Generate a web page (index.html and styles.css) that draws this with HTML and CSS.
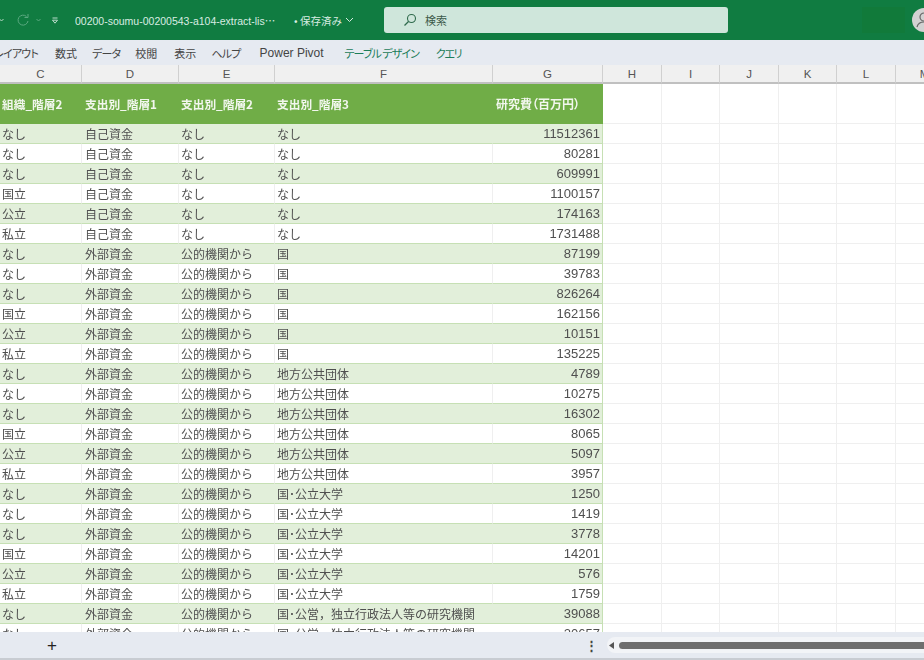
FILE: index.html
```html
<!DOCTYPE html>
<html lang="ja">
<head>
<meta charset="utf-8">
<title>Excel</title>
<link rel="stylesheet" href="styles.css">
</head>
<body>
<div class="app">
<header class="titlebar">
  <div class="qat">
    <svg class="chev" width="5" height="4" viewBox="0 0 5 4"><path d="M0.5 1l2 2 2-2" fill="none" stroke="#b5d8c4"/></svg>
    <svg class="redo" width="14" height="14" viewBox="0 0 14 14"><path d="M10.5 3.5A5 5 0 1 0 12 8M12 1v3.5H8.5" fill="none" stroke="#5aa880" stroke-width="1"/></svg>
    <svg class="chev dim" width="5" height="4" viewBox="0 0 5 4"><path d="M0.5 1l2 2 2-2" fill="none" stroke="#5aa880"/></svg>
    <svg class="cust" width="6" height="7" viewBox="0 0 6 7"><path d="M0.5 1h5M0.5 3.2h5l-2.5 3z" fill="none" stroke="#cfe6db" stroke-width=".9"/></svg>
  </div>
  <div class="doc"><span class="docname">00200-soumu-00200543-a104-extract-lis⋯</span><span class="saved">• 保存済み</span>
    <svg width="9" height="6" viewBox="0 0 9 6"><path d="M1 1l3.5 3.5L8 1" fill="none" stroke="#d6ebe0"/></svg>
  </div>
  <div class="search">
    <svg width="14" height="14" viewBox="0 0 14 14"><circle cx="8.5" cy="5.5" r="4" fill="none" stroke="#2f6a4c" stroke-width="1.1"/><path d="M5.5 8.5L1.5 12.5" stroke="#2f6a4c" stroke-width="1.2"/></svg>
    <span>検索</span>
  </div>
  <div class="ghost"></div>
  <div class="avatar"><svg width="24" height="24" viewBox="0 0 24 24"><circle cx="12" cy="12" r="12" fill="#d2d2d2"/><circle cx="12" cy="9" r="4" fill="none" stroke="#666" stroke-width="1.2"/><path d="M5 19c1-4 4-5 7-5s6 1 7 5" fill="none" stroke="#666" stroke-width="1.2"/></svg></div>
</header>
<nav class="tabs">
  <span class="tab first kana">レイアウト</span>
  <span class="tab">数式</span>
  <span class="tab kana">データ</span>
  <span class="tab wide">校閲</span>
  <span class="tab">表示</span>
  <span class="tab kana">ヘルプ</span>
  <span class="tab pp">Power Pivot</span>
  <span class="tab ctx design">テーブル デザイン</span>
  <span class="tab ctx query">クエリ</span>
</nav>
<main class="sheet">
<table class="grid">
<colgroup>
<col class="c-c"><col class="c-d"><col class="c-e"><col class="c-f"><col class="c-g"><col class="c-h"><col class="c-i"><col class="c-j"><col class="c-k"><col class="c-l"><col class="c-m">
</colgroup>
<thead>
<tr class="letters"><th>C</th><th>D</th><th>E</th><th>F</th><th>G</th><th>H</th><th>I</th><th>J</th><th>K</th><th>L</th><th>M</th></tr>
</thead>
<tbody>
<tr class="head"><td>組織_階層2</td><td>支出別_階層1</td><td>支出別_階層2</td><td>支出別_階層3</td><td class="num">研究費（百万円）</td><td class="e"></td><td class="e"></td><td class="e"></td><td class="e"></td><td class="e"></td><td class="e"></td></tr>
<tr class="g"><td>なし</td><td>自己資金</td><td>なし</td><td>なし</td><td class="num">11512361</td><td></td><td></td><td></td><td></td><td></td><td></td></tr>
<tr><td>なし</td><td>自己資金</td><td>なし</td><td>なし</td><td class="num">80281</td><td></td><td></td><td></td><td></td><td></td><td></td></tr>
<tr class="g"><td>なし</td><td>自己資金</td><td>なし</td><td>なし</td><td class="num">609991</td><td></td><td></td><td></td><td></td><td></td><td></td></tr>
<tr><td>国立</td><td>自己資金</td><td>なし</td><td>なし</td><td class="num">1100157</td><td></td><td></td><td></td><td></td><td></td><td></td></tr>
<tr class="g"><td>公立</td><td>自己資金</td><td>なし</td><td>なし</td><td class="num">174163</td><td></td><td></td><td></td><td></td><td></td><td></td></tr>
<tr><td>私立</td><td>自己資金</td><td>なし</td><td>なし</td><td class="num">1731488</td><td></td><td></td><td></td><td></td><td></td><td></td></tr>
<tr class="g"><td>なし</td><td>外部資金</td><td>公的機関から</td><td>国</td><td class="num">87199</td><td></td><td></td><td></td><td></td><td></td><td></td></tr>
<tr><td>なし</td><td>外部資金</td><td>公的機関から</td><td>国</td><td class="num">39783</td><td></td><td></td><td></td><td></td><td></td><td></td></tr>
<tr class="g"><td>なし</td><td>外部資金</td><td>公的機関から</td><td>国</td><td class="num">826264</td><td></td><td></td><td></td><td></td><td></td><td></td></tr>
<tr><td>国立</td><td>外部資金</td><td>公的機関から</td><td>国</td><td class="num">162156</td><td></td><td></td><td></td><td></td><td></td><td></td></tr>
<tr class="g"><td>公立</td><td>外部資金</td><td>公的機関から</td><td>国</td><td class="num">10151</td><td></td><td></td><td></td><td></td><td></td><td></td></tr>
<tr><td>私立</td><td>外部資金</td><td>公的機関から</td><td>国</td><td class="num">135225</td><td></td><td></td><td></td><td></td><td></td><td></td></tr>
<tr class="g"><td>なし</td><td>外部資金</td><td>公的機関から</td><td>地方公共団体</td><td class="num">4789</td><td></td><td></td><td></td><td></td><td></td><td></td></tr>
<tr><td>なし</td><td>外部資金</td><td>公的機関から</td><td>地方公共団体</td><td class="num">10275</td><td></td><td></td><td></td><td></td><td></td><td></td></tr>
<tr class="g"><td>なし</td><td>外部資金</td><td>公的機関から</td><td>地方公共団体</td><td class="num">16302</td><td></td><td></td><td></td><td></td><td></td><td></td></tr>
<tr><td>国立</td><td>外部資金</td><td>公的機関から</td><td>地方公共団体</td><td class="num">8065</td><td></td><td></td><td></td><td></td><td></td><td></td></tr>
<tr class="g"><td>公立</td><td>外部資金</td><td>公的機関から</td><td>地方公共団体</td><td class="num">5097</td><td></td><td></td><td></td><td></td><td></td><td></td></tr>
<tr><td>私立</td><td>外部資金</td><td>公的機関から</td><td>地方公共団体</td><td class="num">3957</td><td></td><td></td><td></td><td></td><td></td><td></td></tr>
<tr class="g"><td>なし</td><td>外部資金</td><td>公的機関から</td><td>国･公立大学</td><td class="num">1250</td><td></td><td></td><td></td><td></td><td></td><td></td></tr>
<tr><td>なし</td><td>外部資金</td><td>公的機関から</td><td>国･公立大学</td><td class="num">1419</td><td></td><td></td><td></td><td></td><td></td><td></td></tr>
<tr class="g"><td>なし</td><td>外部資金</td><td>公的機関から</td><td>国･公立大学</td><td class="num">3778</td><td></td><td></td><td></td><td></td><td></td><td></td></tr>
<tr><td>国立</td><td>外部資金</td><td>公的機関から</td><td>国･公立大学</td><td class="num">14201</td><td></td><td></td><td></td><td></td><td></td><td></td></tr>
<tr class="g"><td>公立</td><td>外部資金</td><td>公的機関から</td><td>国･公立大学</td><td class="num">576</td><td></td><td></td><td></td><td></td><td></td><td></td></tr>
<tr><td>私立</td><td>外部資金</td><td>公的機関から</td><td>国･公立大学</td><td class="num">1759</td><td></td><td></td><td></td><td></td><td></td><td></td></tr>
<tr class="g"><td>なし</td><td>外部資金</td><td>公的機関から</td><td class="over">国･公営，独立行政法人等の研究機関</td><td class="num">39088</td><td></td><td></td><td></td><td></td><td></td><td></td></tr>
<tr><td>なし</td><td>外部資金</td><td>公的機関から</td><td class="over">国･公営，独立行政法人等の研究機関</td><td class="num">20657</td><td></td><td></td><td></td><td></td><td></td><td></td></tr>
</tbody>
</table>
</main>
<footer class="bar">
  <div class="sheets"><span class="add">+</span></div>
  <span class="more">⋮</span>
  <div class="hscroll">
    <svg width="5" height="7" viewBox="0 0 5 7"><path d="M5 0v7L0 3.5z" fill="#555"/></svg>
    <div class="thumb"></div>
  </div>
</footer>
</div>
</body>
</html>
```
FILE: styles.css
```css
* { box-sizing: border-box; }
html, body { margin: 0; height: 100%; overflow: hidden; background: #fff; }
body { font-family: "Noto Sans CJK JP", "Liberation Sans", sans-serif; color: #4f4f4f; }
.app { width: 924px; height: 660px; display: flex; flex-direction: column; overflow: hidden; filter: blur(.4px); }

.titlebar { height: 40px; flex: none; background: #107c41; display: flex; align-items: center; color: #d9ece2; position: relative; }
.qat { width: 75px; flex: none; display: flex; align-items: center; }
.qat .chev { margin-left: -1px; }
.qat .redo { margin-left: 12px; }
.qat .chev.dim { margin-left: 6px; }
.qat .cust { margin-left: 11px; }
.doc { width: 309px; flex: none; display: flex; align-items: center; font-size: 10.5px; font-family: "Liberation Sans", "Noto Sans CJK JP", sans-serif; white-space: nowrap; }
.docname { width: 219px; overflow: hidden; }
.saved { margin-right: 3px; font-family: "Noto Sans CJK JP", sans-serif; }
.search { width: 344px; height: 26px; flex: none; background: #cfe6db; border-radius: 3px; display: flex; align-items: center; padding-left: 19px; gap: 8px; font-size: 11px; color: #3c5a4a; }
.ghost { width: 43px; height: 26px; margin-left: 134px; flex: none; background: #117a3a; }
.avatar { width: 24px; height: 24px; flex: none; margin-left: 7px; }

.tabs { height: 25px; flex: none; background: #e6eaf1; display: flex; align-items: center; font-size: 11px; font-feature-settings: "palt"; color: #444; white-space: nowrap; padding-left: 55px; position: relative; }
.tab { margin-right: 15px; }
.wide { margin-right: 17px; }
.kana { letter-spacing: -.8px; }
.first { position: absolute; left: -6px; margin: 0; }
.pp { margin-left: 4px; margin-right: 21px; font-size: 12px; font-family: "Liberation Sans", sans-serif; }
.ctx { color: #1d7d5a; }
.design { letter-spacing: -.95px; margin-right: 17px; }
.query { letter-spacing: -1.4px; }

.sheet { flex: 1; min-height: 0; overflow: hidden; }
.grid { width: 954px; table-layout: fixed; border-collapse: separate; border-spacing: 0; font-size: 12px; }
.c-c { width: 82px; } .c-d { width: 97px; } .c-e { width: 96px; } .c-f { width: 218px; } .c-g { width: 110px; }
.c-h { width: 59px; } .c-i { width: 58px; } .c-j { width: 59px; } .c-k { width: 58px; } .c-l { width: 59px; } .c-m { width: 58px; }

.letters th { height: 19px; padding: 0; background: #f0f0f0; border-right: 1px solid #d0d0d0; border-bottom: 2px solid #c0c0c0; font-weight: 400; font-size: 11.5px; line-height: 16px; color: #555; font-family: "Liberation Sans", sans-serif; }

.grid td { height: 20px; padding: 0 0 0 2px; line-height: 19px; white-space: nowrap; overflow: hidden; border-right: 1px solid #efefef; border-bottom: 1px solid #efefef; }
.grid td:nth-child(2) { padding-left: 3px; }
.grid td.over { overflow: visible; border-right: 0; }
.grid td.num { text-align: right; padding: 0 2px 0 0; font-size: 13px; border-right-color: #c6e0b4; font-family: "Liberation Sans", sans-serif; }

.grid tr.head td { height: 40px; background: #70ad47; color: #f2f7ee; font-weight: 700; font-size: 11.7px; line-height: 18px; border: 0; }
.grid tr.head td.num { font-family: "Noto Sans CJK JP", sans-serif; font-size: 12px; padding: 0 23px 0 0; font-feature-settings: "palt"; }
.grid tr.head td.e { background: #fff; padding: 0; border-right: 1px solid #efefef; border-bottom: 1px solid #efefef; }

.grid tr.g td { border-bottom-color: #efefef; }
.grid tr.g td:nth-child(-n+5) { background: #e2efda; border-right-color: #e2efda; border-bottom-color: #c6e0b4; }
.grid tr:not(.g):not(.head) td:nth-child(-n+5) { border-bottom-color: #c6e0b4; }
.grid tr.g td:nth-child(5) { border-right-color: #c6e0b4; }

.bar { height: 28px; flex: none; background: #e6eaf1; border-bottom: 2px solid #c8ccd2; display: flex; align-items: center; position: relative; }
.sheets { width: 585px; flex: none; padding-left: 47px; height: 100%; display: flex; align-items: center; }
.add { font-size: 17px; line-height: 1; color: #222; font-family: "Liberation Sans", sans-serif; }
.more { width: 12px; flex: none; text-align: center; font-size: 13px; font-weight: 700; line-height: 16px; color: #444; }
.hscroll { flex: 1; margin-left: 10px; height: 16px; background: #f2f4f7; border-radius: 8px 0 0 8px; display: flex; align-items: center; padding-left: 2px; gap: 5px; }
.thumb { flex: 1; height: 7px; background: #6e6e6e; border-radius: 4px 0 0 4px; }
```
